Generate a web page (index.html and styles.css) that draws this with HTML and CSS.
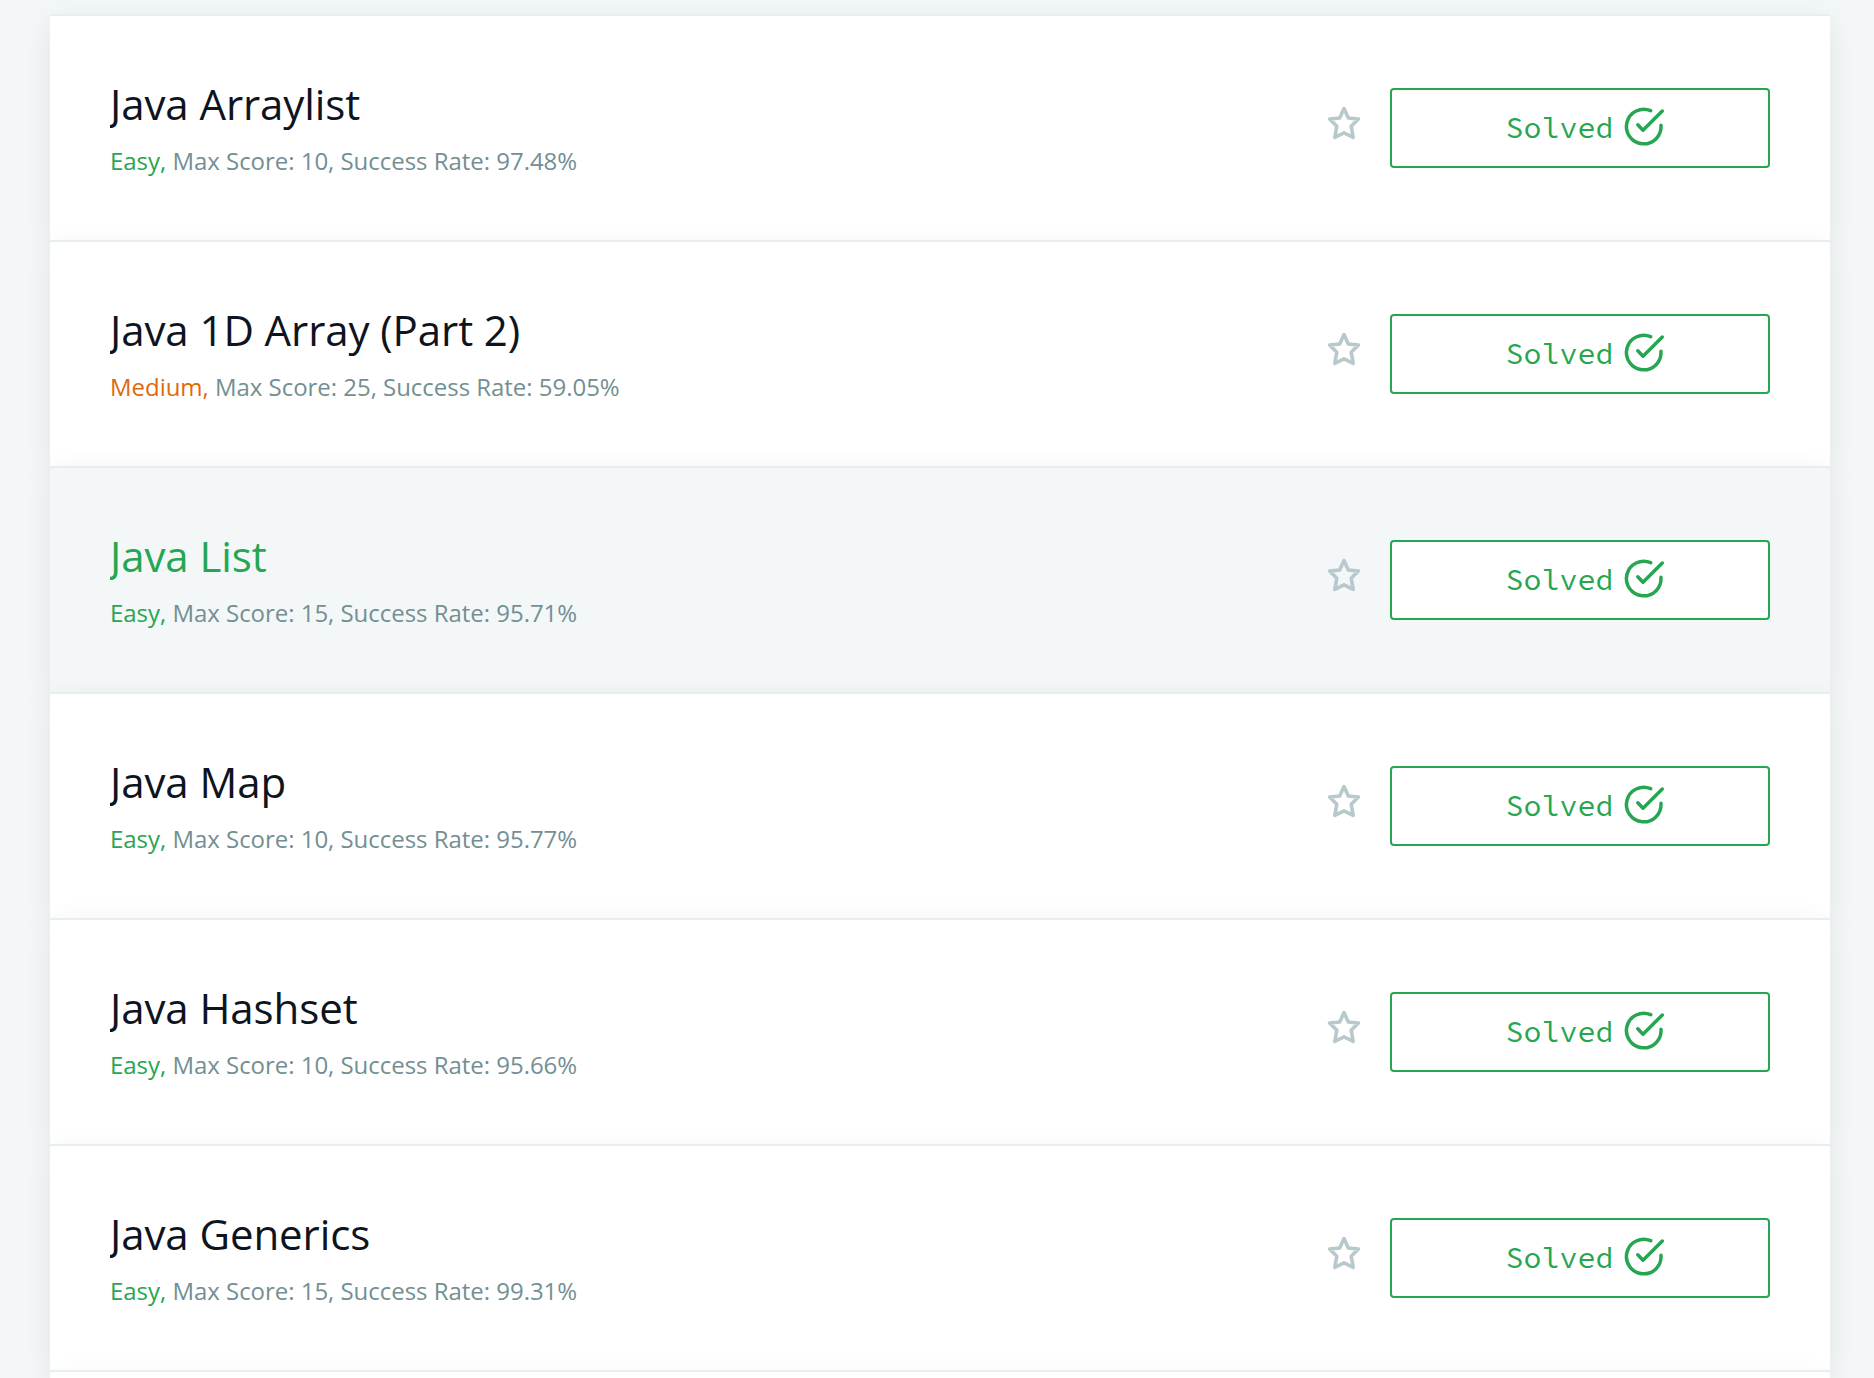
FILE: index.html
```html
<!DOCTYPE html>
<html lang="en">
<head>
<meta charset="utf-8">
<title>Java Challenges</title>
<link rel="stylesheet" href="styles.css">
</head>
<body>
<svg class="sprite" aria-hidden="true">
  <symbol id="star" viewBox="0 0 36 36"><path d="M18 3.6l4.3 9.4 10.1 1.1-7.2 7.2 2 11.1-9.2-4.5-9.2 4.5 2-11.1-7.2-7.2L13.7 13z"/></symbol>
  <symbol id="check" viewBox="0 0 44 44"><path d="M28.7 5.7A17.3 17.3 0 1 0 39 20.3M15.8 19.8l5.2 5.4L40.3 6"/></symbol>
</svg>
<main class="list">
  <article class="row">
    <div class="info"><h2 class="title">Java Arraylist</h2><p class="meta"><span class="easy">Easy,</span> Max Score: 10, Success Rate: 97.48%</p></div>
    <svg class="star"><use href="#star"/></svg>
    <button class="solved"><span class="label">Solved</span><svg class="check"><use href="#check"/></svg></button>
  </article>
  <article class="row">
    <div class="info"><h2 class="title">Java 1D Array (Part 2)</h2><p class="meta"><span class="medium">Medium,</span> Max Score: 25, Success Rate: 59.05%</p></div>
    <svg class="star"><use href="#star"/></svg>
    <button class="solved"><span class="label">Solved</span><svg class="check"><use href="#check"/></svg></button>
  </article>
  <article class="row active">
    <div class="info"><h2 class="title">Java List</h2><p class="meta"><span class="easy">Easy,</span> Max Score: 15, Success Rate: 95.71%</p></div>
    <svg class="star"><use href="#star"/></svg>
    <button class="solved"><span class="label">Solved</span><svg class="check"><use href="#check"/></svg></button>
  </article>
  <article class="row">
    <div class="info"><h2 class="title">Java Map</h2><p class="meta"><span class="easy">Easy,</span> Max Score: 10, Success Rate: 95.77%</p></div>
    <svg class="star"><use href="#star"/></svg>
    <button class="solved"><span class="label">Solved</span><svg class="check"><use href="#check"/></svg></button>
  </article>
  <article class="row">
    <div class="info"><h2 class="title">Java Hashset</h2><p class="meta"><span class="easy">Easy,</span> Max Score: 10, Success Rate: 95.66%</p></div>
    <svg class="star"><use href="#star"/></svg>
    <button class="solved"><span class="label">Solved</span><svg class="check"><use href="#check"/></svg></button>
  </article>
  <article class="row">
    <div class="info"><h2 class="title">Java Generics</h2><p class="meta"><span class="easy">Easy,</span> Max Score: 15, Success Rate: 99.31%</p></div>
    <svg class="star"><use href="#star"/></svg>
    <button class="solved"><span class="label">Solved</span><svg class="check"><use href="#check"/></svg></button>
  </article>
  <article class="row last"></article>
</main>
</body>
</html>
```
FILE: styles.css
```css
* { box-sizing: border-box; }
body {
  margin: 0;
  background: #f3f7f7;
  font-family: "Open Sans", "Noto Sans", sans-serif;
}
.sprite { display: none; }
.list {
  height: 1378px;
  padding: 14px 44px 0 50px;
  overflow: hidden;
}
.row {
  position: relative;
  display: flex;
  align-items: flex-start;
  height: 226px;
  padding: 72px 60px 0;
  border-top: 2px solid #e7eeef;
  background: #fff;
  box-shadow: 0 8px 28px rgba(0, 0, 0, .08);
}
.row.active { background: #f3f7f7; }
.row.last { height: 8px; padding: 0; }
.info { flex: 1; margin-top: -14px; }
.title {
  margin: 0;
  overflow: hidden;
  color: #0e141e;
  font-size: 42px;
  font-weight: 400;
  letter-spacing: -.08px;
  line-height: 60px;
}
.active .title { color: #26a651; }
.meta {
  margin: 11px 0 0;
  color: #738f93;
  font-size: 24px;
  letter-spacing: -.03px;
  line-height: 32px;
}
.easy { color: #26a651; }
.medium { color: #dc6a0c; }
.star {
  width: 36px;
  height: 36px;
  margin: 17px 28px 0 0;
  fill: none;
  stroke: #b7c9cc;
  stroke-width: 3.6;
  stroke-linejoin: round;
}
.solved {
  display: flex;
  align-items: center;
  justify-content: center;
  width: 380px;
  height: 80px;
  padding: 0 0 0 11px;
  border: 2px solid #26a651;
  border-radius: 4px;
  background: #fff;
  color: #26a651;
  font: 30px "Source Code Pro", "Noto Sans Mono", "Liberation Mono", monospace;
}
.label { padding-bottom: 3px; }
.check {
  width: 44px;
  height: 44px;
  margin: 0 0 2px 8px;
  fill: none;
  stroke: #26a651;
  stroke-width: 3.5;
  stroke-linecap: round;
  stroke-linejoin: round;
}
```
